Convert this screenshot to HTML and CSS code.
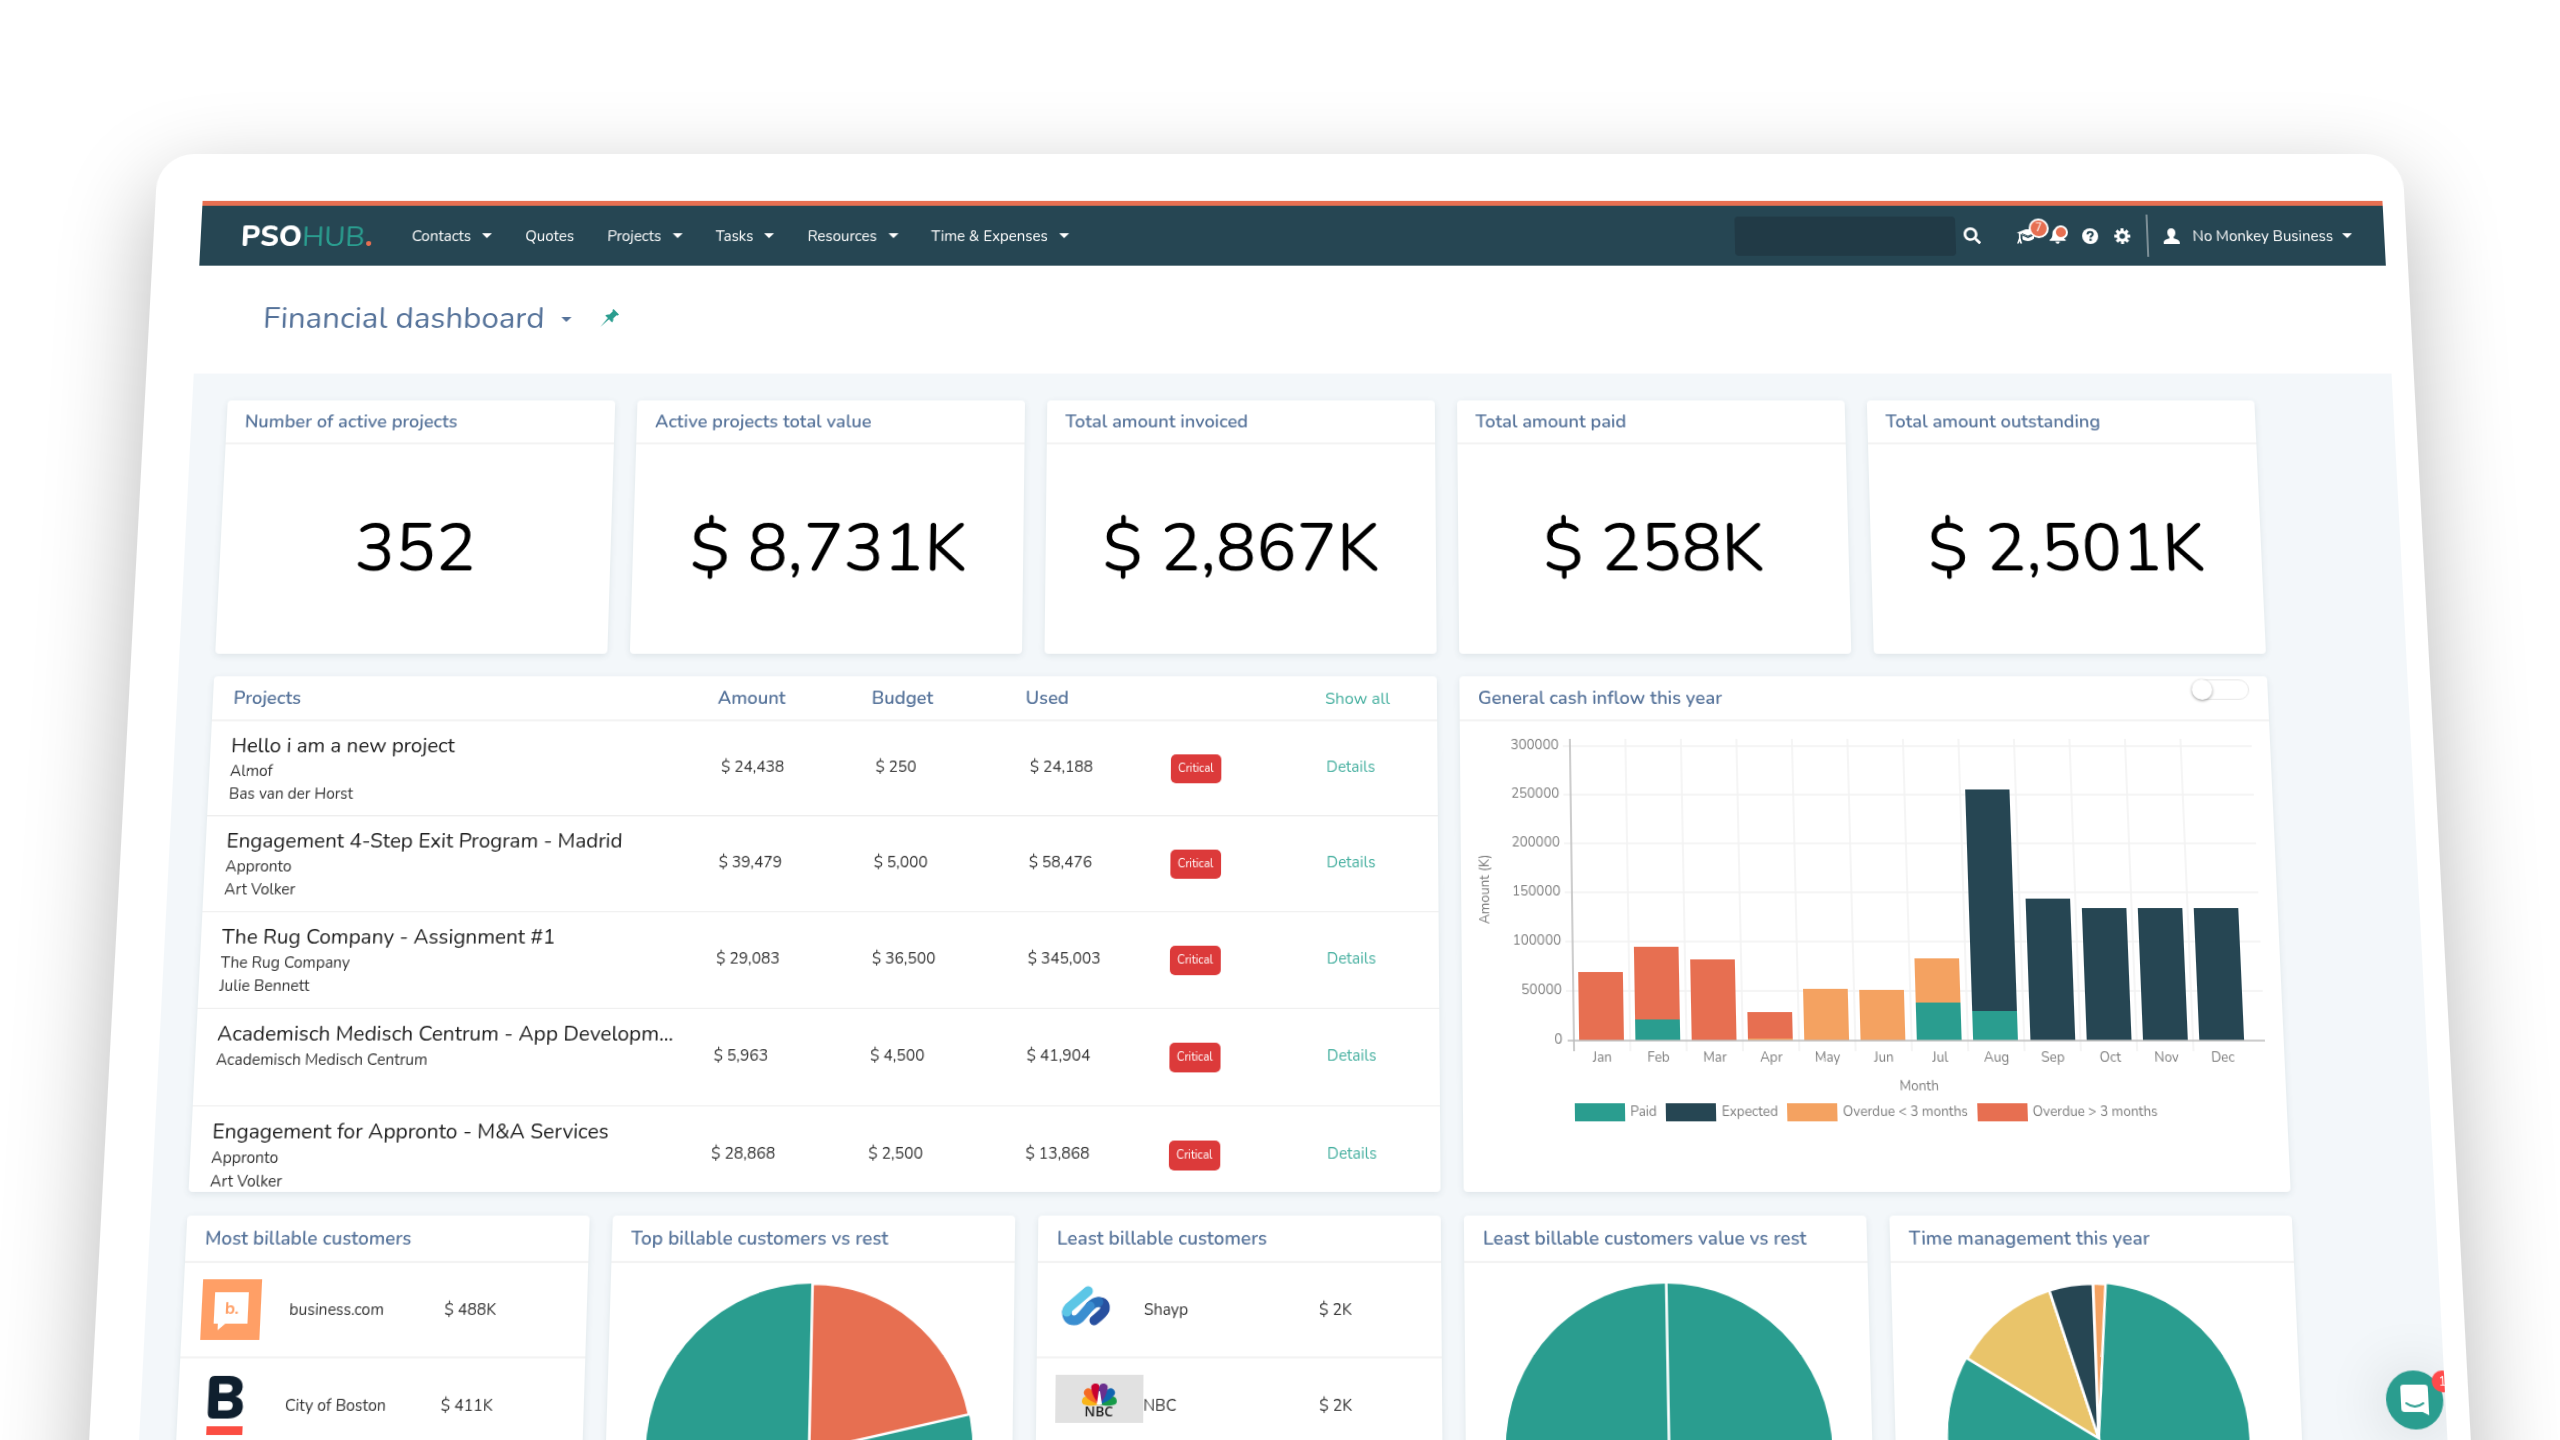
FILE: index.html
```html
<!DOCTYPE html>
<html lang="en">
<head>
<meta charset="utf-8">
<title>Financial dashboard - PSOHUB</title>
<meta name="viewport" content="width=device-width, initial-scale=1">
<link rel="stylesheet" href="styles.css">
</head>
<body>
<main class="stage">
<div class="device">
<div class="screen">

  <header class="navbar">
    <a class="logo" href="#"><span class="logo-pso">PSO</span><span class="logo-hub">HUB</span><span class="logo-dot">.</span></a>
    <nav class="menu">
      <button class="menu-item caret">Contacts</button>
      <a class="menu-item" href="#">Quotes</a>
      <button class="menu-item caret">Projects</button>
      <button class="menu-item caret">Tasks</button>
      <button class="menu-item caret">Resources</button>
      <button class="menu-item caret">Time &amp; Expenses</button>
    </nav>
    <div class="tools">
      <input class="search" type="text" aria-label="Search">
      <button class="icon-btn search-btn" aria-label="Search">
        <svg viewBox="0 0 512 512" width="17" height="17"><path fill="#fff" d="M505 442.700L405.300 343c-4.500-4.500-10.600-7-17-7H372c27.600-35.300 44-79.700 44-128C416 93.100 322.900 0 208 0S0 93.100 0 208s93.100 208 208 208c48.300 0 92.700-16.400 128-44v16.300c0 6.400 2.500 12.500 7 17l99.700 99.700c9.400 9.400 24.600 9.400 33.900 0l28.300-28.300c9.400-9.400 9.400-24.600.1-34zM208 336c-70.700 0-128-57.200-128-128 0-70.700 57.200-128 128-128 70.700 0 128 57.200 128 128 0 70.700-57.200 128-128 128z"/></svg>
      </button>
      <button class="icon-btn academy" aria-label="Academy">
        <svg viewBox="0 0 20 17" width="20" height="17"><g fill="#fff"><path d="M0 5.500 9 2h4l7 3.500-9 4z"/><path d="M5.500 8.600 11 11l6-2.700v3.200c-3 3-8 3.200-11.500.8z"/><path d="M2 6h1.600v5L5 16.500H3.200L2.600 14l-1 2.500H0L2 11z"/></g><path d="M5 6.500 11 9l6-2.500" fill="none" stroke="#264653"/></svg>
        <span class="count">7</span>
      </button>
      <button class="icon-btn bell" aria-label="Notifications">
        <svg viewBox="0 0 17 17" width="17" height="17"><path fill="#fff" d="M8.500 0c.7 0 1.200.5 1.200 1.200C12.300 1.800 13.500 4 13.500 6.500c0 3.500 1.200 5 3 6.200v1H.5v-1c1.800-1.200 3-2.700 3-6.200 0-2.500 1.200-4.700 3.800-5.300C7.300.5 7.800 0 8.500 0zM6.300 14.600h4.400a2.200 2.200 0 0 1-4.400 0z"/></svg>
        <span class="dot"></span>
      </button>
      <button class="icon-btn" aria-label="Help">
        <svg viewBox="0 0 16 16" width="16" height="16"><circle cx="8" cy="8" r="8" fill="#fff"/><path d="M5.400 6.200C5.500 4.500 6.600 3.700 8 3.700s2.700.9 2.700 2.200c0 1.700-2.400 1.700-2.400 3.500" fill="none" stroke="#264653" stroke-width="2"/><rect x="7.200" y="10.600" width="2.200" height="2.200" fill="#264653"/></svg>
      </button>
      <button class="icon-btn" aria-label="Settings">
        <svg viewBox="-8 -8 16 16" width="16" height="16"><g stroke="#fff" stroke-width="3"><path d="M0-8V-4M0 8V4M-8 0h4M8 0H4M-5.600-5.600l3 3M5.600 5.600l-3-3M-5.600 5.600l3-3M5.600-5.600l-3 3"/><circle r="4.300" fill="none"/></g></svg>
      </button>
      <button class="account caret">
        <svg viewBox="0 0 16 16" width="16" height="16"><path fill="#fff" d="M8 0c2.500 0 4 1.700 4 4.200 0 1.900-.8 3.700-1.900 4.600v1.400c2.900.9 5.900 1.800 5.900 4.300V16H0v-1.500c0-2.500 3-3.400 5.900-4.300V8.800C4.800 7.900 4 6.100 4 4.200 4 1.700 5.500 0 8 0z"/></svg>
        <span>No Monkey Business</span>
      </button>
    </div>
  </header>

  <div class="heading">
    <h1 class="page-title caret">Financial dashboard</h1>
    <button class="icon-btn" aria-label="Pin">
      <svg viewBox="0 0 18 18" width="18" height="18"><path fill="#2a9d8f" d="M12.500 0 18 5.500l-1.200 1-1.200-.3-3.200 3.300c.3 1.700-.1 3-1.100 4L8.200 10.300 0 18l7-8.900L4.400 6.500c1.100-1 2.500-1.300 4.100-1l3.300-3.200-.4-1.200z"/></svg>
    </button>
  </div>

  <section class="board">
    <article class="card"><h2 class="card-title">Number of active projects</h2><p class="figure">352</p></article>
    <article class="card"><h2 class="card-title">Active projects total value</h2><p class="figure">$ 8,731K</p></article>
    <article class="card"><h2 class="card-title">Total amount invoiced</h2><p class="figure">$ 2,867K</p></article>
    <article class="card"><h2 class="card-title">Total amount paid</h2><p class="figure">$ 258K</p></article>
    <article class="card"><h2 class="card-title">Total amount outstanding</h2><p class="figure">$ 2,501K</p></article>

    <article class="card card-wide">
      <table class="projects">
        <colgroup><col class="c-name"><col class="c-num"><col class="c-num"><col class="c-used"><col class="c-num"><col></colgroup>
        <thead>
          <tr><th class="name">Projects</th><th>Amount</th><th>Budget</th><th>Used</th><th></th><th><a class="link" href="#">Show all</a></th></tr>
        </thead>
        <tbody>
          <tr><td class="name"><strong>Hello i am a new project</strong><span>Almof</span><span>Bas van der Horst</span></td><td>$ 24,438</td><td>$ 250</td><td>$ 24,188</td><td class="status"><span class="badge">Critical</span></td><td class="more"><a class="link" href="#">Details</a></td></tr>
          <tr><td class="name"><strong>Engagement 4-Step Exit Program - Madrid</strong><span>Appronto</span><span>Art Volker</span></td><td>$ 39,479</td><td>$ 5,000</td><td>$ 58,476</td><td class="status"><span class="badge">Critical</span></td><td class="more"><a class="link" href="#">Details</a></td></tr>
          <tr><td class="name"><strong>The Rug Company - Assignment #1</strong><span>The Rug Company</span><span>Julie Bennett</span></td><td>$ 29,083</td><td>$ 36,500</td><td>$ 345,003</td><td class="status"><span class="badge">Critical</span></td><td class="more"><a class="link" href="#">Details</a></td></tr>
          <tr><td class="name"><strong>Academisch Medisch Centrum - App Developm...</strong><span>Academisch Medisch Centrum</span></td><td>$ 5,963</td><td>$ 4,500</td><td>$ 41,904</td><td class="status"><span class="badge">Critical</span></td><td class="more"><a class="link" href="#">Details</a></td></tr>
          <tr><td class="name"><strong>Engagement for Appronto - M&amp;A Services</strong><span>Appronto</span><span>Art Volker</span></td><td>$ 28,868</td><td>$ 2,500</td><td>$ 13,868</td><td class="status"><span class="badge">Critical</span></td><td class="more"><a class="link" href="#">Details</a></td></tr>
        </tbody>
      </table>
    </article>

    <article class="card card-chart">
      <h2 class="card-title">General cash inflow this year</h2>
      <input class="switch" type="checkbox" aria-label="Show cumulative inflow">
      <svg class="bars" viewBox="0 -1 788 361" role="img" aria-label="Cash inflow by month">
        <g stroke="#f2f2f2" stroke-width="1.500">
          <path d="M100 23H770M100 70H770M100 117H770M100 164H770M100 211H770M100 258H770"/>
          <path d="M161 16V315M215 16V315M269 16V315M323 16V315M377 16V315M431 16V315M485 16V315M539 16V315M593 16V315M647 16V315M701 16V315"/>
        </g>
        <g fill="#e76f51">
          <rect x="112" y="240" width="43" height="65"/>
          <rect x="166" y="216" width="43" height="69"/>
          <rect x="220" y="228" width="43" height="77"/>
          <rect x="274" y="278" width="43" height="25"/>
        </g>
        <g fill="#f4a261">
          <rect x="274" y="303" width="43" height="2"/>
          <rect x="328" y="256" width="43" height="49"/>
          <rect x="382" y="257" width="43" height="48"/>
          <rect x="436" y="227" width="43" height="43"/>
        </g>
        <g fill="#264653">
          <rect x="490" y="65" width="43" height="212"/>
          <rect x="545" y="170" width="43" height="135"/>
          <rect x="599" y="179" width="43" height="126"/>
          <rect x="653" y="179" width="43" height="126"/>
          <rect x="707" y="179" width="43" height="126"/>
        </g>
        <g fill="#2a9d8f">
          <rect x="166" y="285" width="43" height="20"/>
          <rect x="436" y="269" width="43" height="36"/>
          <rect x="490" y="277" width="43" height="28"/>
        </g>
        <path d="M107 16V315M101 305H770" fill="none" stroke="#bdbdbd" stroke-width="1.500"/>
        <g class="axis" text-anchor="end">
          <text x="96" y="26">300000</text><text x="96" y="73">250000</text><text x="96" y="120">200000</text><text x="96" y="167">150000</text><text x="96" y="214">100000</text><text x="96" y="261">50000</text><text x="96" y="308">0</text>
        </g>
        <g class="axis" text-anchor="middle">
          <text x="134" y="325">Jan</text><text x="188" y="325">Feb</text><text x="242" y="325">Mar</text><text x="296" y="325">Apr</text><text x="350" y="325">May</text><text x="404" y="325">Jun</text><text x="458" y="325">Jul</text><text x="512" y="325">Aug</text><text x="566" y="325">Sep</text><text x="621" y="325">Oct</text><text x="675" y="325">Nov</text><text x="729" y="325">Dec</text>
          <text x="437" y="352">Month</text>
          <text transform="translate(27 161) rotate(-90)">Amount (K)</text>
        </g>
      </svg>
      <ul class="legend">
        <li class="paid">Paid</li><li class="expected">Expected</li><li class="soon">Overdue &lt; 3 months</li><li class="late">Overdue &gt; 3 months</li>
      </ul>
    </article>

    <article class="card card-tall">
      <h2 class="card-title">Most billable customers</h2>
      <table class="customers">
        <colgroup><col class="c-logo"><col class="c-most"><col></colgroup>
        <tr>
          <td class="brand"><svg viewBox="0 0 56 56" width="56" height="56"><path fill="#ff9f66" d="M0 0h56v56H0z"/><path fill="#fff" d="M12 12h32v29H23l-7 6v-6h-4z"/><text class="b-mark" x="22" y="32">b.</text></svg></td>
          <td>business.com</td><td>$ 488K</td>
        </tr>
        <tr>
          <td class="brand"><svg viewBox="0 0 56 56" width="56" height="56"><text class="boston-mark" x="7" y="40">B</text><path fill="#fb4d42" d="M10 47h34v8H10z"/></svg></td>
          <td>City of Boston</td><td>$ 411K</td>
        </tr>
      </table>
    </article>

    <article class="card card-tall">
      <h2 class="card-title">Top billable customers vs rest</h2>
      <svg class="pie" viewBox="0 0 383 330" role="img" aria-label="Top customers against the rest">
        <g transform="translate(191.500 173)" stroke="#fff" stroke-width="2.500">
          <circle r="154" fill="#2a9d8f" stroke="none"/>
          <path fill="#e76f51" d="M0 0V-154A154 154 0 0 1 150.200-33.900z"/>
        </g>
      </svg>
    </article>

    <article class="card card-tall">
      <h2 class="card-title">Least billable customers</h2>
      <table class="customers">
        <colgroup><col class="c-logo"><col class="c-least"><col></colgroup>
        <tr>
          <td class="brand"><svg viewBox="0 0 56 56" width="56" height="56"><g fill="none" stroke-width="9" stroke-linecap="round"><path stroke="#28509f" d="M40 21Q47 21 46 28 45 31 36 38"/><path stroke="#2a6fb8" d="M32 25Q36 21 40 21"/><path stroke="#3a8ed0" d="M10 30Q10 38 17 38 21 38 24 34L32 25"/><path stroke="#5cc6e6" d="M30 11 12 26Q10 28 10 30"/></g></svg></td>
          <td>Shayp</td><td>$ 2K</td>
        </tr>
        <tr>
          <td class="brand brand-nbc"><svg viewBox="0 0 83 44" width="83" height="44"><path fill="#e1e1e1" d="M0 0h83v44H0z"/><g transform="translate(41.500 27)"><path fill="#f9b51a" transform="rotate(-76)" d="M0 0C-3-5-4-10-3.800-13a3.800 3.800 0 0 1 7.600 0C4-10 3-5 0 0z"/><path fill="#169a48" transform="rotate(76)" d="M0 0C-3-5-4-10-3.800-13a3.800 3.800 0 0 1 7.600 0C4-10 3-5 0 0z"/><path fill="#f56a22" transform="rotate(-45)" d="M0 0C-3-5-4.500-10-4-15a4 4 0 0 1 8 0C4.500-10 3-5 0 0z"/><path fill="#1064b0" transform="rotate(45)" d="M0 0C-3-5-4.500-10-4-15a4 4 0 0 1 8 0C4.500-10 3-5 0 0z"/><path fill="#c9002f" transform="rotate(-14)" d="M0 0C-3-5-4.500-10-4-15.500a4 4 0 0 1 8 0C4.500-10 3-5 0 0z"/><path fill="#6a2f8e" transform="rotate(14)" d="M0 0C-3-5-4.500-10-4-15.500a4 4 0 0 1 8 0C4.500-10 3-5 0 0z"/><path fill="#fff" d="M-.5-12h1L2.500 0h-5z"/></g><text class="nbc-mark" x="41" y="38" text-anchor="middle">NBC</text></svg></td>
          <td>NBC</td><td>$ 2K</td>
        </tr>
      </table>
    </article>

    <article class="card card-tall">
      <h2 class="card-title">Least billable customers value vs rest</h2>
      <svg class="pie" viewBox="0 0 383 330" role="img" aria-label="Least customers value against the rest">
        <g transform="translate(191.500 173)" stroke="#fff" stroke-width="2.500">
          <circle r="154" fill="#2a9d8f" stroke="none"/>
          <path d="M0 0V-154"/>
        </g>
      </svg>
    </article>

    <article class="card card-tall">
      <h2 class="card-title">Time management this year</h2>
      <svg class="pie" viewBox="0 0 383 330" role="img" aria-label="Time management">
        <g transform="translate(191.500 161)" stroke="#fff" stroke-width="2.500">
          <circle r="142" fill="#2a9d8f" stroke="none"/>
          <path fill="#e9c46a" d="M0 0-121.700-73.100A142 142 0 0 1-41.800-135.700z"/>
          <path fill="#264653" d="M0 0-41.800-135.700A142 142 0 0 1 0-142z"/>
          <path fill="#f4a261" d="M0 0V-142A142 142 0 0 1 11.800-141.500z"/>
        </g>
      </svg>
    </article>
  </section>

  <button class="chat" aria-label="Open chat">
    <svg viewBox="0 0 26 28" width="26" height="28"><path fill="#fff" d="M3 0h20q3 0 3 3v25l-6-3H3q-3 0-3-3V3q0-3 3-3z"/><path d="M5 17q8 6 16 0" fill="none" stroke="#2a9d8f" stroke-width="2" stroke-linecap="round"/></svg>
    <span class="chat-count">1</span>
  </button>
</div>
</div>
</main>
</body>
</html>
```
FILE: styles.css
```css
* { box-sizing: border-box; }

body {
  margin: 0;
  background: #fff;
  color: #333;
  font: 15px/22px Nunito, Lato, "Open Sans", sans-serif;
}

h1, h2, p, ul { margin: 0; padding: 0; font-weight: 400; }
a { color: inherit; text-decoration: none; }
button { border: 0; padding: 0; background: none; color: inherit; font: inherit; cursor: pointer; }
svg { display: block; overflow: visible; }

/* The tablet leans back, so it widens towards the bottom of the window. */
.stage {
  height: 100vh;
  overflow: hidden;
  padding: 154px 158px 0;
}

.device {
  padding: 48px 22px 40px 47px;
  border-radius: 36px;
  background: #fff;
  box-shadow: 0 30px 90px rgba(0, 0, 0, .28);
  transform: perspective(4840px) rotateX(13deg);
  transform-origin: 50% 0;
}

.screen { position: relative; overflow: hidden; }

/* Navigation */
.navbar {
  display: flex;
  align-items: center;
  height: 66px;
  padding: 0 32px 0 40px;
  border-top: 5px solid #e76f51;
  background: #264653;
  color: #fff;
}

.logo { display: flex; margin-right: 39px; padding-top: 2px; font-size: 29px; line-height: 36px; }
.logo-pso { font-weight: 800; }
.logo-hub { color: #2a9d8f; font-weight: 400; }
.logo-dot { color: #e76f51; font-weight: 800; }

.menu { display: flex; gap: 33px; }
.menu-item { white-space: nowrap; }

.caret { display: flex; align-items: center; }
.caret::after {
  content: "";
  margin-left: 11px;
  border: 5px solid transparent;
  border-top-color: currentColor;
  border-bottom: 0;
}

.tools { display: flex; align-items: center; margin-left: auto; }
.search {
  width: 220px;
  height: 40px;
  padding: 0 12px;
  border: 0;
  border-radius: 4px;
  background: #213a46;
  color: #fff;
  font: inherit;
}
.icon-btn { position: relative; margin-right: 16px; }
.search-btn { margin: 0 36px 0 8px; }
.academy { margin-right: 12px; }

.count, .dot {
  position: absolute;
  border: 2px solid #fff;
  border-radius: 50%;
  background: #e76f51;
}
.count { top: -9px; left: 12px; z-index: 1; width: 20px; height: 20px; font-size: 11px; line-height: 16px; }
.dot { top: -2px; left: 5px; width: 14px; height: 14px; }

.account { gap: 13px; height: 43px; padding-left: 15px; border-left: 2px solid #7b8e96; }
.account::after { margin-left: -4px; }

/* Page heading */
.heading { display: flex; align-items: center; gap: 29px; height: 109px; padding: 0 0 3px 66px; color: #56739a; }
.page-title { font-size: 31px; line-height: 38px; }
.page-title::after { margin: 3px 0 0 17px; }

/* Cards */
.board {
  display: grid;
  grid-template-columns: repeat(5, 1fr);
  gap: 22px;
  padding: 27px 137px 120px 35px;
  background: #f3f7fa;
}

.card {
  display: flex;
  flex-direction: column;
  min-height: 251px;
  border-radius: 4px;
  background: #fff;
  box-shadow: 0 2px 6px rgba(38, 70, 83, .1);
}
.card-wide { grid-column: span 3; height: 492px; }
.card-chart { grid-column: span 2; position: relative; }
.card-tall { min-height: 400px; }

.card-title {
  height: 44px;
  padding: 0 18px;
  border-bottom: 2px solid #f3f3f3;
  color: #56739a;
  font-size: 18px;
  font-weight: 600;
  line-height: 42px;
}

.figure { margin: auto; padding-bottom: 2px; color: #000; font-size: 66px; line-height: 80px; }

/* Tables */
table { border-spacing: 0; table-layout: fixed; width: 100%; }
td, th { padding: 0; text-align: left; }

.c-name { width: 492px; }
.c-num { width: 150px; }
.c-used { width: 142px; }

.projects th { height: 44px; border-bottom: 2px solid #f3f3f3; color: #56739a; font-size: 18px; font-weight: 600; line-height: 40px; }
.projects th .link { font-size: 16px; font-weight: 400; }
.projects td { height: 92px; padding: 0 0 3px 5px; border-bottom: 1px solid #eee; }
.projects tr:last-child td { border-bottom-color: transparent; }
.projects td.status { padding: 0; }
.projects td.more { padding-left: 1px; }
.projects .name { padding-left: 20px; }
.projects td.name { padding: 11px 0 0 20px; vertical-align: top; }
.name strong { display: block; color: #1d1d1d; font-size: 20px; font-weight: 400; line-height: 26px; white-space: nowrap; }
.name span { display: block; }

.link { color: #45af9f; }
.badge {
  display: inline-block;
  padding: 0 7px;
  border-radius: 5px;
  background: #dc3a3a;
  color: #fff;
  font-size: 11px;
  line-height: 28px;
  vertical-align: middle;
}

/* Cash inflow chart */
.switch {
  position: absolute;
  top: 3px;
  right: 18px;
  width: 56px;
  height: 20px;
  margin: 0;
  border: 1px solid #e8e8e8;
  border-radius: 10px;
  appearance: none;
}
.switch::before {
  content: "";
  display: block;
  width: 20px;
  height: 20px;
  margin: -1px;
  border-radius: 50%;
  background: #fff;
  box-shadow: 0 1px 3px rgba(0, 0, 0, .4);
}
.axis { fill: #7d7d7d; font-size: 13px; }

.legend { display: flex; gap: 9px; padding: 4px 0 0 107px; color: #7d7d7d; font-size: 13px; line-height: 17px; list-style: none; }
.legend li { display: flex; gap: 5px; white-space: nowrap; }
.legend li::before { content: ""; width: 48px; height: 17px; background: currentColor; }
.paid::before { color: #2a9d8f; }
.expected::before { color: #264653; }
.soon::before { color: #f4a261; }
.late::before { color: #e76f51; }

/* Customer lists */
.c-logo { width: 101px; }
.c-most { width: 147px; }
.c-least { width: 166px; }
.customers td { height: 88px; border-bottom: 2px solid #f3f3f3; }
.customers .brand { padding-left: 18px; }
.customers .brand-nbc { padding-bottom: 12px; }

.b-mark { fill: #ff9f66; font-size: 16px; font-weight: 700; }
.boston-mark { fill: #0f1f2e; font-size: 55px; font-weight: 900; }
.nbc-mark { fill: #222; font: 600 13px "Open Sans", sans-serif; }

/* Chat launcher */
.chat {
  position: absolute;
  top: 1132px;
  right: 2px;
  display: grid;
  place-items: center;
  width: 54px;
  height: 54px;
  border-radius: 50%;
  background: #2a9d8f;
  box-shadow: 0 4px 60px rgba(0, 0, 0, .16);
}
.chat-count {
  position: absolute;
  top: 0;
  right: -10px;
  width: 20px;
  height: 20px;
  border-radius: 50%;
  background: #ff4b4b;
  color: #fff;
  font-size: 12px;
  line-height: 20px;
}
```
